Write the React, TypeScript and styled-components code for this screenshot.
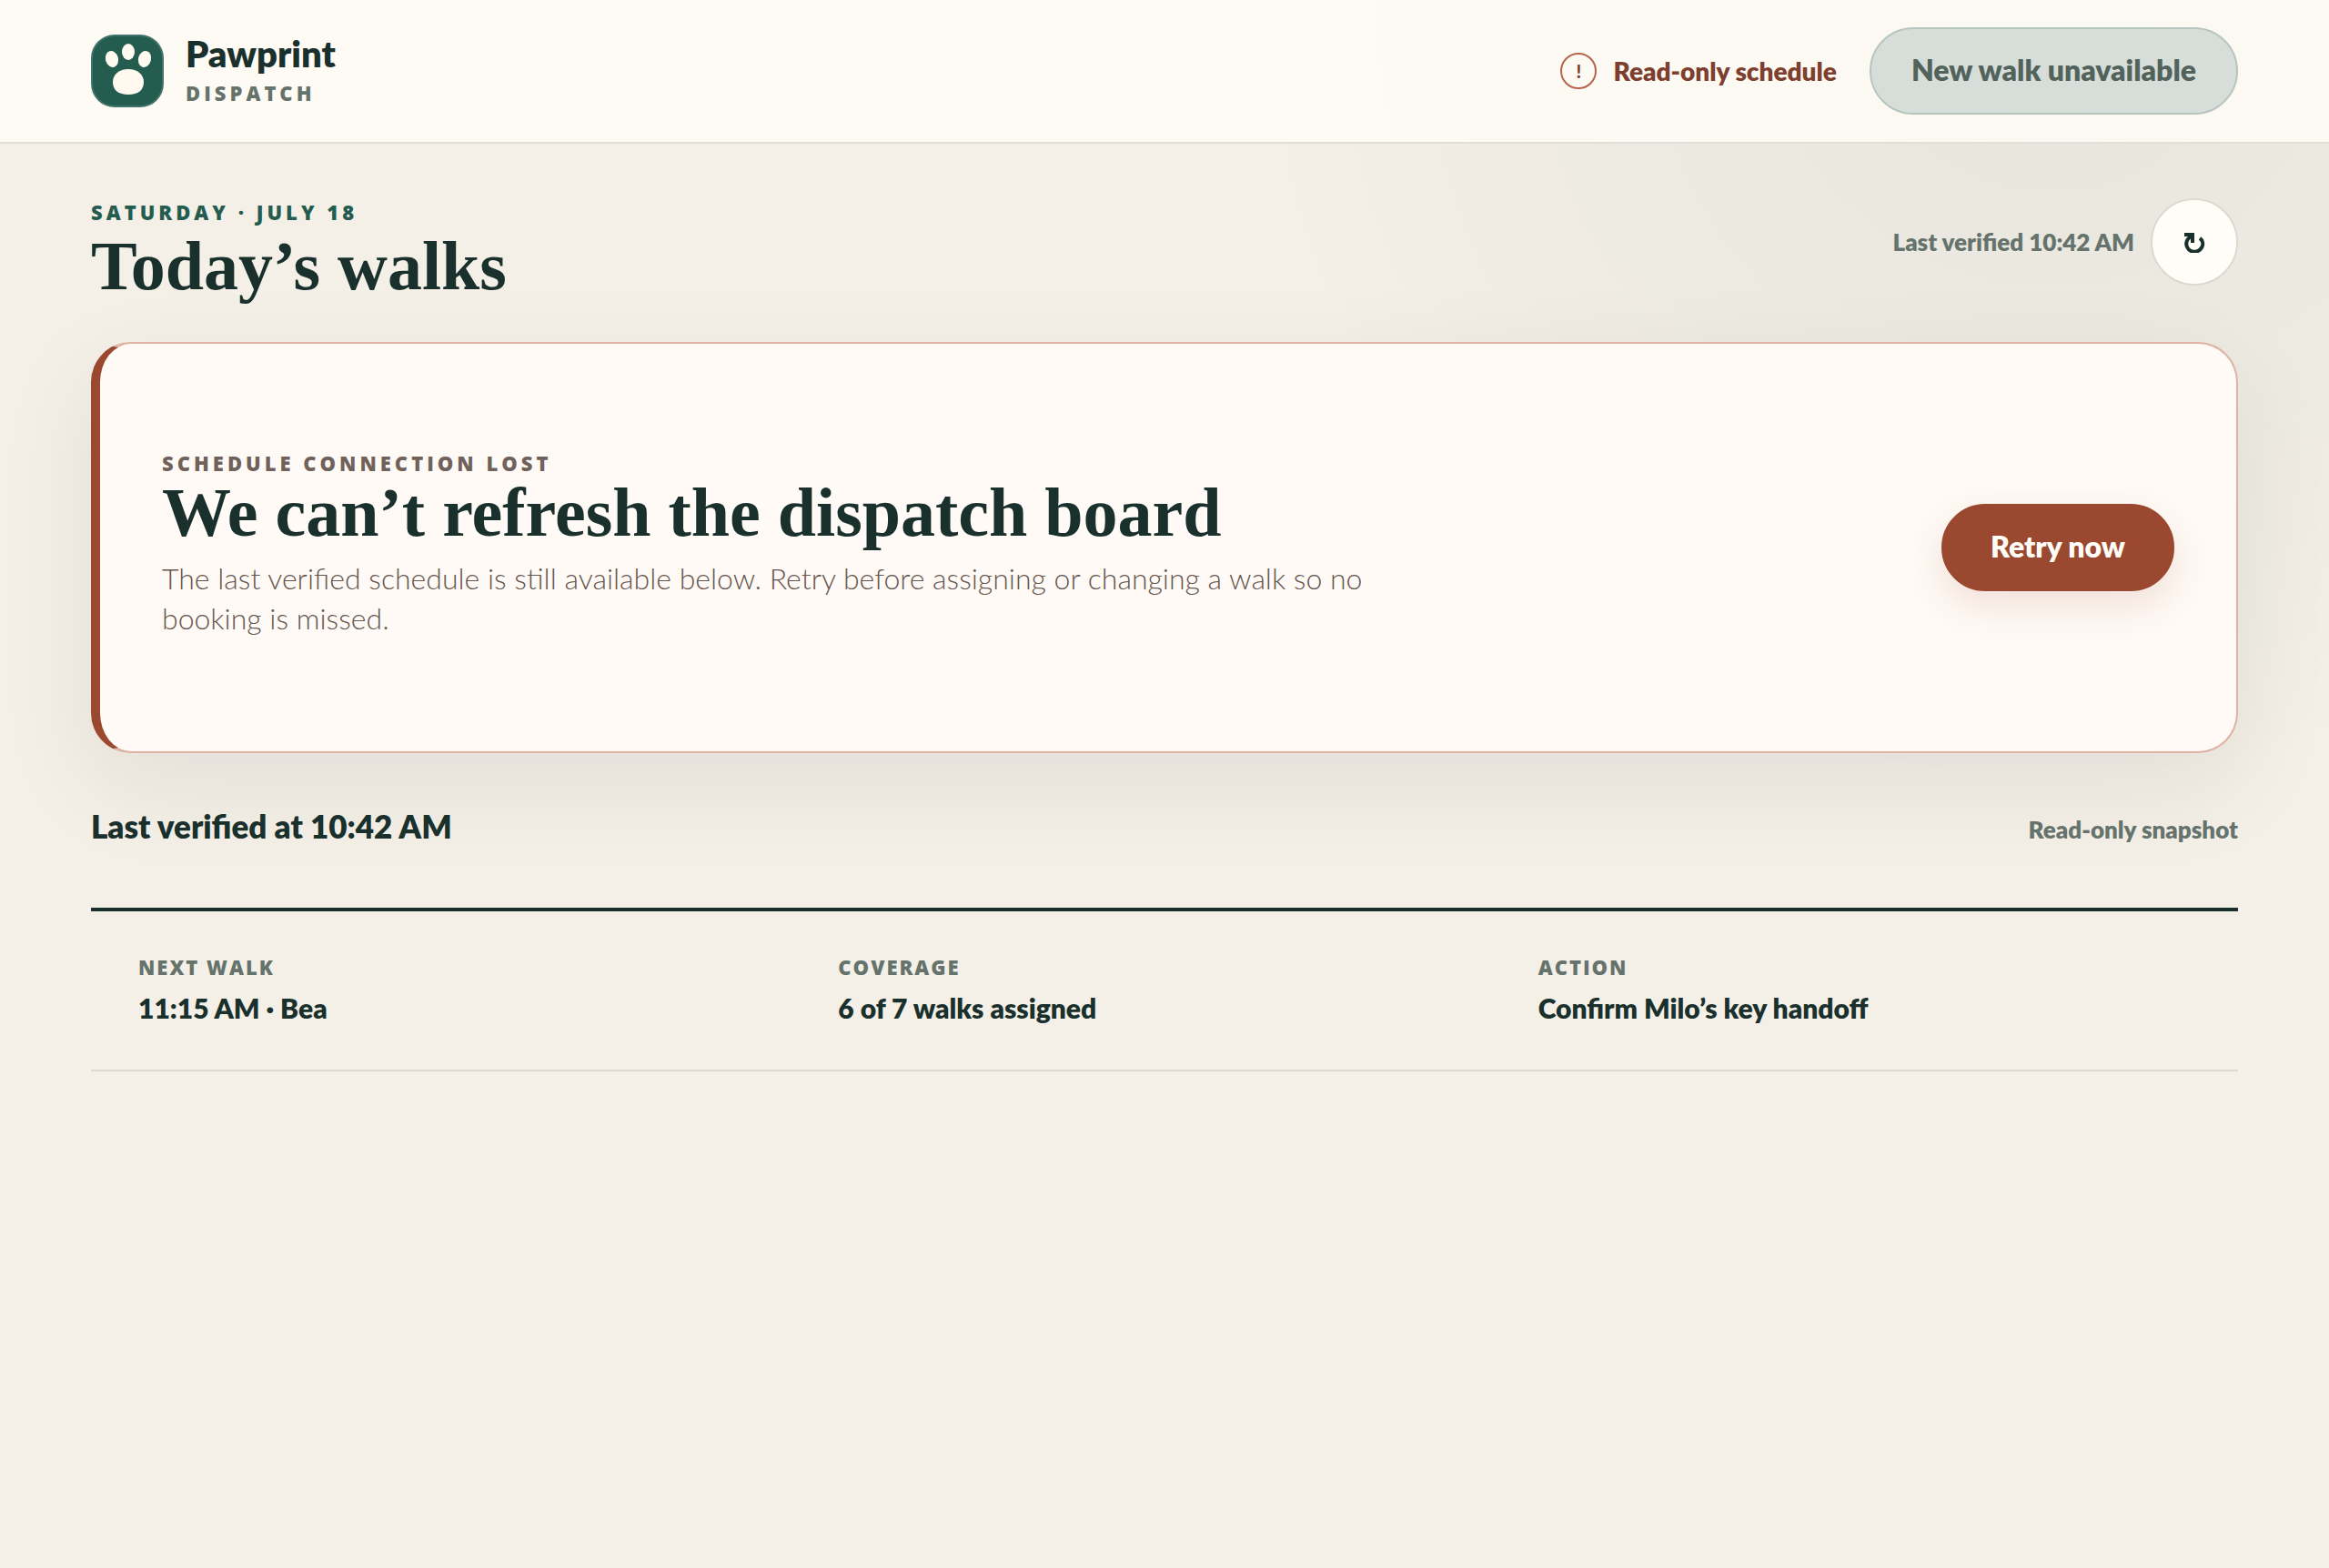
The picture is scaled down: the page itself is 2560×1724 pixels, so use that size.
import React from "react";
import styled, { createGlobalStyle } from "styled-components";

const ink = "#19302c";
const green = "#245c4f";
const muted = "#65736c";
const rust = "#9a482f";
const sans = `Lato, "Open Sans", sans-serif`;
const serif = `"Liberation Serif", "Times New Roman", serif`;

const GlobalStyle = createGlobalStyle`
  * { box-sizing: border-box; margin: 0; padding: 0; }
  body {
    min-height: 100vh;
    color: ${ink};
    font-family: ${sans};
    background: radial-gradient(circle at 88% 0, rgba(36, 92, 79, 0.07), transparent 880px) no-repeat, #f4efe7;
  }
`;

const Header = styled.header`
  padding: 30px 100px;
  border-bottom: 2px solid #dfe1d9;
  background: rgba(255, 253, 247, 0.84);
`;

const Bar = styled.div`
  display: flex;
  align-items: center;
  justify-content: space-between;
  max-width: 2360px;
  margin: 0 auto;
`;

const Main = styled.main`
  max-width: 2560px;
  margin: 0 auto;
  padding: 60px 100px;
`;

const Brand = styled.div`
  display: flex;
  align-items: center;
  gap: 24px;
`;

const BrandText = styled.div`
  display: grid;
  gap: 8px;
`;

const BrandName = styled.strong`
  font-size: 40px;
  font-weight: 800;
  line-height: 40px;
`;

const Caps = styled.span<{ $color?: string; $spacing?: number }>`
  display: block;
  color: ${(p) => p.$color ?? muted};
  font-family: "Open Sans", ${sans};
  font-size: 22px;
  font-weight: 800;
  line-height: 30px;
  letter-spacing: ${(p) => p.$spacing ?? 4}px;
  text-transform: uppercase;
`;

const HeaderActions = styled.div`
  display: flex;
  align-items: center;
  gap: 36px;
`;

const Status = styled.span`
  display: flex;
  align-items: center;
  gap: 18px;
  color: #7e3f2e;
  font-size: 28px;
  font-weight: 800;
  line-height: 40px;
`;

const AlertMark = styled.span`
  display: grid;
  place-items: center;
  width: 40px;
  height: 40px;
  border: 2px solid #b9644c;
  border-radius: 50%;
  font-size: 20px;
  font-weight: 900;
  line-height: 32px;
`;

const Button = styled.button<{ $tone: "quiet" | "danger" }>`
  height: 96px;
  padding: 0 ${(p) => (p.$tone === "danger" ? 52 : 44)}px 4px;
  border: 2px solid ${(p) => (p.$tone === "danger" ? rust : "#b7c5bf")};
  border-radius: 48px;
  background: ${(p) => (p.$tone === "danger" ? rust : "#d7deda")};
  color: ${(p) => (p.$tone === "danger" ? "#fffdf8" : "#52635c")};
  box-shadow: ${(p) => (p.$tone === "danger" ? "0 16px 40px rgba(154, 72, 47, 0.14)" : "none")};
  font-family: inherit;
  font-size: 32px;
  font-weight: 800;
  white-space: nowrap;
`;

const PageHead = styled.div`
  display: flex;
  align-items: flex-start;
  justify-content: space-between;
  margin-bottom: 40px;
`;

const Title = styled.h1`
  font-family: ${serif};
  font-size: 76px;
  font-weight: 700;
  line-height: 88px;
`;

const Freshness = styled.div`
  display: flex;
  align-items: center;
  gap: 18px;
`;

const Note = styled.span`
  color: ${muted};
  font-size: 26px;
  font-weight: 800;
  line-height: 32px;
`;

const RoundButton = styled.button`
  display: grid;
  place-items: center;
  width: 96px;
  height: 96px;
  border: 2px solid #dcd9ce;
  border-radius: 50%;
  background: #fffdf8;
  color: ${ink};
`;

const AlertPanel = styled.section`
  display: flex;
  align-items: center;
  justify-content: space-between;
  gap: 68px;
  padding: 116px 68px;
  border: 2px solid #dfb3a4;
  border-left: 10px solid ${rust};
  border-radius: 44px;
  background: #fffaf5;
  box-shadow: 0 36px 110px rgba(25, 48, 44, 0.08);
`;

const AlertTitle = styled(Title).attrs({ as: "h2" })`
  line-height: 78px;
`;

const AlertText = styled.p`
  max-width: 1360px;
  margin: 12px 0 8px;
  color: #65564f;
  font-size: 32px;
  font-weight: 300;
  line-height: 44px;
`;

const SnapshotHead = styled.div`
  display: flex;
  align-items: baseline;
  justify-content: space-between;
  margin: 56px 0 66px;
`;

const SnapshotTitle = styled.h2`
  font-size: 35px;
  font-weight: 800;
  line-height: 48px;
`;

const Facts = styled.dl`
  display: grid;
  grid-template-columns: repeat(3, 1fr);
  gap: 52px;
  padding: 46px 52px 48px;
  border-top: 4px solid ${ink};
  border-bottom: 2px solid #dcd9ce;
`;

const FactValue = styled.dd`
  margin-top: 10px;
  font-size: 30px;
  font-weight: 800;
  line-height: 40px;
`;

const Logo = () => (
  <svg width="80" height="80" viewBox="0 0 80 80" aria-hidden="true">
    <rect width="80" height="80" rx="26" fill="#41736a" />
    <rect x="2" y="2" width="76" height="76" rx="24" fill={green} />
    <g fill="#fff9ef">
      <ellipse cx="23" cy="27" rx="7" ry="9" transform="rotate(-16 23 27)" />
      <ellipse cx="41" cy="19" rx="7" ry="9" />
      <ellipse cx="59" cy="27" rx="7" ry="9" transform="rotate(16 59 27)" />
      <path d="M41 38c10 0 17 6 17 14 0 9-6 14-17 14s-17-5-17-14c0-8 7-14 17-14Z" />
    </g>
  </svg>
);

const RefreshIcon = () => (
  <svg width="24" height="24" viewBox="0 0 24 24" fill="none" stroke="currentColor" aria-hidden="true">
    <path d="M1 4h9v9" strokeWidth="4" />
    <path d="M8 6C4 9 2 13 4 17.500c3 7 13 7 16.500 0C22 14 21 10 18 8" strokeWidth="4" />
  </svg>
);

const facts = [
  { label: "Next walk", value: "11:15 AM · Bea" },
  { label: "Coverage", value: "6 of 7 walks assigned" },
  { label: "Action", value: "Confirm Milo’s key handoff" },
];

export default function App() {
  return (
    <>
      <GlobalStyle />
      <Header>
        <Bar>
          <Brand>
            <Logo />
            <BrandText>
              <BrandName>Pawprint</BrandName>
              <Caps>Dispatch</Caps>
            </BrandText>
          </Brand>
          <HeaderActions>
            <Status role="status">
              <AlertMark aria-hidden="true">!</AlertMark>
              Read-only schedule
            </Status>
            <Button $tone="quiet" disabled>New walk unavailable</Button>
          </HeaderActions>
        </Bar>
      </Header>
      <Main>
        <PageHead>
          <div>
            <Caps $color={green}>Saturday · July 18</Caps>
            <Title>Today’s walks</Title>
          </div>
          <Freshness>
            <Note>Last verified 10:42 AM</Note>
            <RoundButton aria-label="Refresh schedule"><RefreshIcon /></RoundButton>
          </Freshness>
        </PageHead>
        <AlertPanel role="alert">
          <div>
            <Caps $color="#70615a">Schedule connection lost</Caps>
            <AlertTitle>We can’t refresh the dispatch board</AlertTitle>
            <AlertText>
              The last verified schedule is still available below. Retry before assigning or changing a walk so no
              booking is missed.
            </AlertText>
          </div>
          <Button $tone="danger">Retry now</Button>
        </AlertPanel>
        <SnapshotHead>
          <SnapshotTitle>Last verified at 10:42 AM</SnapshotTitle>
          <Note>Read-only snapshot</Note>
        </SnapshotHead>
        <Facts>
          {facts.map((fact) => (
            <div key={fact.label}>
              <Caps as="dt" $spacing={2}>{fact.label}</Caps>
              <FactValue>{fact.value}</FactValue>
            </div>
          ))}
        </Facts>
      </Main>
    </>
  );
}
